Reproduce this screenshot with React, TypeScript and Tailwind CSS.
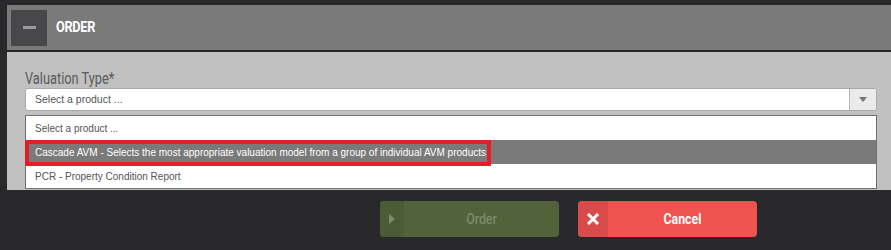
import React from 'react';

const options = [
  'Select a product ...',
  'Cascade AVM - Selects the most appropriate valuation model from a group of individual AVM products',
  'PCR - Property Condition Report',
];

const App = () => {
  return (
    <div className="w-[891px] h-[250px] bg-[#29292b] pt-[5px] pl-[7px] overflow-hidden">
      {/* panel header */}
      <div className="h-[45px] bg-[#7a7a7a] flex items-center pl-[4px]">
        <div className="w-[36px] h-[36px] bg-[#48484a] flex items-center justify-center">
          <div className="w-[13px] h-[3px] bg-[#9a9a9a]" />
        </div>
        <div className="ml-[9px] text-white font-bold text-[15px] scale-x-[0.85] origin-left tracking-tight" style={{ fontFamily: 'Roboto, sans-serif' }}>
          ORDER
        </div>
      </div>

      {/* body */}
      <div className="mt-[2px] h-[138px] bg-[#c0c0c0] pl-[18px] pr-[14px] pt-[17px]">
        <div className="text-[#5b5b5b] text-[16px] leading-[19px] scale-x-[0.8] origin-left" style={{ fontFamily: 'Roboto, sans-serif' }}>
          Valuation Type*
        </div>
        <div className="h-[23px] flex bg-white border border-[#a9a9a9] rounded-[3px] overflow-hidden">
          <div className="flex-1 flex items-center pl-[9px] text-[10.5px] text-[#555]" style={{ fontFamily: '"Liberation Sans", Arial, sans-serif' }}>
            {options[0]}
          </div>
          <div className="w-[27px] bg-[#ebebeb] border-l border-[#b5b5b5] flex items-center justify-center">
            <div className="w-0 h-0 border-l-[4px] border-r-[4px] border-t-[5px] border-l-transparent border-r-transparent border-t-[#777]" />
          </div>
        </div>
        <div className="mt-[4px] border border-[#6f6f6f] bg-white" style={{ fontFamily: '"Liberation Sans", Arial, sans-serif' }}>
          {options.map((o, i) => (
            <div
              key={i}
              className={`relative h-[24px] flex items-center pl-[9px] text-[10px] ${i === 1 ? 'bg-[#7a7a7a] text-white' : 'text-[#555]'}`}
            >
              {o}
              {i === 1 && <div className="absolute left-[-1px] top-[0px] w-[466px] h-[26px] border-[4px] border-[#e41e26]" />}
            </div>
          ))}
        </div>
      </div>

      {/* footer buttons */}
      <div className="flex pl-[373px] mt-[11px] gap-[19px]" style={{ fontFamily: 'Roboto, sans-serif' }}>
        <div className="w-[179px] h-[36px] rounded-[4px] bg-[#52633b] flex overflow-hidden">
          <div className="w-[24px] bg-[#4b5b36] flex items-center justify-center">
            <div className="w-0 h-0 border-t-[5px] border-b-[5px] border-l-[6px] border-t-transparent border-b-transparent border-l-[#7d8a6c]" />
          </div>
          <div className="flex-1 flex items-center justify-center text-[#7d8a6c] font-medium text-[14px] scale-x-[0.88]">Order</div>
        </div>
        <div className="w-[179px] h-[36px] rounded-[4px] bg-[#ef5350] flex overflow-hidden">
          <div className="w-[30px] bg-[#d84b48] flex items-center justify-center">
            <svg width="12" height="12" viewBox="0 0 12 12">
              <path d="M2 2 L10 10 M10 2 L2 10" stroke="white" strokeWidth="3" strokeLinecap="square" />
            </svg>
          </div>
          <div className="flex-1 flex items-center justify-center text-white font-bold text-[14px] scale-x-[0.88]">Cancel</div>
        </div>
      </div>
    </div>
  );
};

export default App;
